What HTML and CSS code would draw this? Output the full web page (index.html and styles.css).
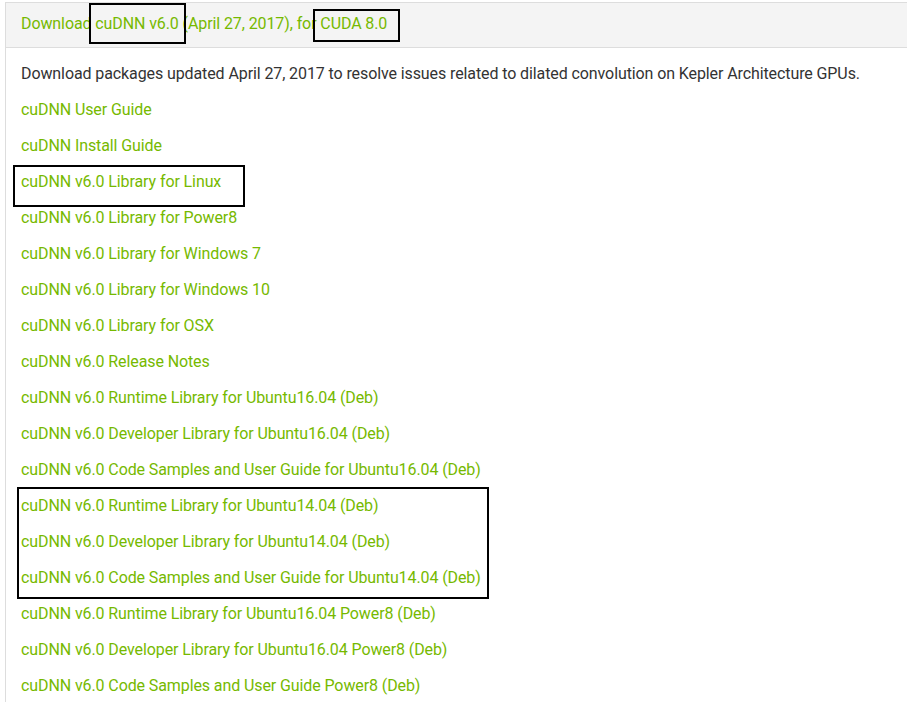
FILE: index.html
```html
<!DOCTYPE html>
<html>
<head>
<meta charset="utf-8">
<link rel="stylesheet" href="styles.css">
</head>
<body>
<div class="page">
  <div class="panel">
    <div class="panel-head">
      <a class="link">Download cuDNN v6.0 (April 27, 2017), for CUDA 8.0</a>
    </div>
    <div class="panel-body">
      <p class="note">Download packages updated April 27, 2017 to resolve issues related to dilated convolution on Kepler Architecture GPUs.</p>
      <p><a class="link">cuDNN User Guide</a></p>
      <p><a class="link">cuDNN Install Guide</a></p>
      <p><a class="link">cuDNN v6.0 Library for Linux</a></p>
      <p><a class="link">cuDNN v6.0 Library for Power8</a></p>
      <p><a class="link">cuDNN v6.0 Library for Windows 7</a></p>
      <p><a class="link">cuDNN v6.0 Library for Windows 10</a></p>
      <p><a class="link">cuDNN v6.0 Library for OSX</a></p>
      <p><a class="link">cuDNN v6.0 Release Notes</a></p>
      <p><a class="link">cuDNN v6.0 Runtime Library for Ubuntu16.04 (Deb)</a></p>
      <p><a class="link">cuDNN v6.0 Developer Library for Ubuntu16.04 (Deb)</a></p>
      <p><a class="link">cuDNN v6.0 Code Samples and User Guide for Ubuntu16.04 (Deb)</a></p>
      <p><a class="link">cuDNN v6.0 Runtime Library for Ubuntu14.04 (Deb)</a></p>
      <p><a class="link">cuDNN v6.0 Developer Library for Ubuntu14.04 (Deb)</a></p>
      <p><a class="link">cuDNN v6.0 Code Samples and User Guide for Ubuntu14.04 (Deb)</a></p>
      <p><a class="link">cuDNN v6.0 Runtime Library for Ubuntu16.04 Power8 (Deb)</a></p>
      <p><a class="link">cuDNN v6.0 Developer Library for Ubuntu16.04 Power8 (Deb)</a></p>
      <p><a class="link">cuDNN v6.0 Code Samples and User Guide Power8 (Deb)</a></p>
    </div>
  </div>
  <div class="mark mark-ver"></div>
  <div class="mark mark-cuda"></div>
  <div class="mark mark-linux"></div>
  <div class="mark mark-u1404"></div>
</div>
</body>
</html>
```
FILE: styles.css
```css
html, body {
  margin: 0;
  padding: 0;
  background: #ffffff;
}
body {
  font-family: Roboto, "Liberation Sans", sans-serif;
  font-size: 16px;
  letter-spacing: -0.1px;
  color: #333333;
}
.page {
  position: relative;
  width: 907px;
  height: 702px;
  overflow: hidden;
}
.panel {
  margin: 2px 0 0 5px;
  border-left: 1px solid #dddddd;
}
.panel-head {
  background: #f4f4f4;
  border-top: 1px solid #dddddd;
  border-bottom: 1px solid #dddddd;
  height: 44px;
  line-height: 42px;
  padding-left: 15px;
}
.panel-body {
  padding: 8px 0 0 15px;
}
.panel-body p {
  margin: 0;
  line-height: 36px;
  height: 36px;
  white-space: nowrap;
}
.link {
  color: #76b900;
  text-decoration: none;
}
.note {
  color: #333333;
}
.mark {
  position: absolute;
  border: 2px solid #000000;
  box-sizing: border-box;
}
.mark-ver {
  left: 89px;
  top: 3px;
  width: 97px;
  height: 41px;
}
.mark-cuda {
  left: 313px;
  top: 9px;
  width: 87px;
  height: 33px;
}
.mark-linux {
  left: 13px;
  top: 165px;
  width: 232px;
  height: 42px;
}
.mark-u1404 {
  left: 17px;
  top: 487px;
  width: 472px;
  height: 112px;
}
```
